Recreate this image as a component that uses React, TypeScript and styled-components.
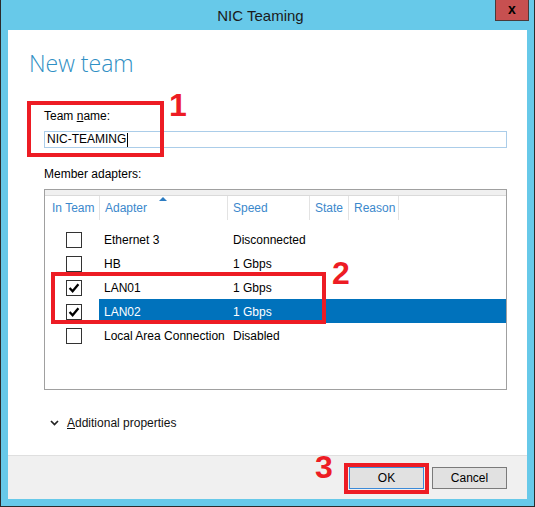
import styled, { createGlobalStyle } from "styled-components"

const GlobalStyle = createGlobalStyle`
  html, body {
    margin: 0;
    padding: 0;
  }
  body {
    width: 535px;
    height: 507px;
    overflow: hidden;
    font-family: "Liberation Sans", Arial, sans-serif;
    font-size: 12px;
    color: #000;
  }
`

const adapters = [
  { name: "Ethernet 3", speed: "Disconnected", inTeam: false, selected: false },
  { name: "HB", speed: "1 Gbps", inTeam: false, selected: false },
  { name: "LAN01", speed: "1 Gbps", inTeam: true, selected: false },
  { name: "LAN02", speed: "1 Gbps", inTeam: true, selected: true },
  { name: "Local Area Connection", speed: "Disabled", inTeam: false, selected: false },
]

const headers = ["In Team", "Adapter", "Speed", "State", "Reason"]

const Check = () => (
  <svg width="14" height="14" viewBox="0 0 14 14">
    <path d="M2.6 7 L5.6 10.2 L11.4 3.2" fill="none" stroke="#000" strokeWidth="2.3" />
  </svg>
)

const App = () => {
  return (
    <>
      <GlobalStyle />
      <Window>
        <TitleBar>
          NIC Teaming
          <CloseButton>x</CloseButton>
        </TitleBar>
        <Client>
          <Main>
            <Heading>New team</Heading>
            <Form>
              <Label>
                Team <u>n</u>ame:
              </Label>
              <TextBox>
                NIC-TEAMING
                <Caret />
              </TextBox>
              <Label $gap={18}>Member adapters:</Label>
              <ListBox>
                <TopBand />
                <HeaderRow>
                  {headers.map((h, i) => (
                    <HeaderCell key={h} $first={i === 0}>
                      {i === 1 && <SortArrow />}
                      {h}
                    </HeaderCell>
                  ))}
                </HeaderRow>
                <Rows>
                  {adapters.map((a) => (
                    <Row key={a.name}>
                      <CheckCell>
                        <CheckBox>{a.inTeam && <Check />}</CheckBox>
                      </CheckCell>
                      <RowMain $selected={a.selected}>
                        <Cell>{a.name}</Cell>
                        <Cell>{a.speed}</Cell>
                      </RowMain>
                    </Row>
                  ))}
                </Rows>
              </ListBox>
              <Expander>
                <svg width="9" height="6" viewBox="0 0 9 6">
                  <path d="M1 1 L4.5 4.5 L8 1" fill="none" stroke="#222" strokeWidth="1.7" />
                </svg>
                <span>
                  <u>A</u>dditional properties
                </span>
              </Expander>
            </Form>
          </Main>
          <Footer>
            <Button $primary>OK</Button>
            <Button>Cancel</Button>
          </Footer>
        </Client>

        {/* red annotations drawn over the dialog */}
        <Mark style={{ left: 26, top: 101, width: 137, height: 56 }} />
        <Digit style={{ left: 168, top: 89 }}>1</Digit>
        <Mark style={{ left: 50, top: 272, width: 275, height: 52 }} />
        <Digit style={{ left: 331, top: 257 }}>2</Digit>
        <Mark style={{ left: 343, top: 463, width: 85, height: 31 }} />
        <Digit style={{ left: 314, top: 451 }}>3</Digit>
      </Window>
    </>
  )
}

export default App

const Window = styled.div`
  position: relative;
  width: 535px;
  height: 507px;
  box-sizing: border-box;
  background: #67c9e9;
  border: 1px solid #2b2b2b;
  border-top: none;
  display: flex;
  flex-direction: column;
`

const TitleBar = styled.div`
  position: relative;
  height: 30px;
  flex-shrink: 0;
  display: flex;
  align-items: center;
  justify-content: center;
  padding-right: 14px;
  font-size: 15px;
  color: #1b1b1b;
`

const CloseButton = styled.div`
  position: absolute;
  top: 0;
  right: 5px;
  width: 34px;
  height: 21px;
  box-sizing: border-box;
  background: #c75050;
  border: 1px solid #4a3a3a;
  border-top: none;
  display: flex;
  align-items: center;
  justify-content: center;
  font-size: 14px;
  font-weight: 700;
  padding-bottom: 2px;
  color: #000;
`

const Client = styled.div`
  flex: 1;
  margin: 0 7px 7px 7px;
  background: #fff;
  display: flex;
  flex-direction: column;
`

const Main = styled.div`
  flex: 1;
  padding: 17px 20px 0 21px;
  display: flex;
  flex-direction: column;
`

const Heading = styled.h1`
  margin: 0;
  font-family: "Open Sans", "Noto Sans", sans-serif;
  font-weight: 300;
  font-size: 23px;
  line-height: 32px;
  color: #2f8fc4;
`

const Form = styled.div`
  padding-left: 15px;
  display: flex;
  flex-direction: column;
`

const Label = styled.div<{ $gap?: number }>`
  margin-top: ${(p) => p.$gap ?? 29}px;
  line-height: 16px;
  margin-bottom: 7px;
`

const TextBox = styled.div`
  height: 17px;
  box-sizing: border-box;
  border: 1px solid #abcde9;
  padding-left: 2px;
  display: flex;
  align-items: center;
  line-height: 15px;
`

const Caret = styled.span`
  display: inline-block;
  width: 1px;
  height: 14px;
  background: #000;
  margin-left: 1px;
`

const ListBox = styled.div`
  height: 201px;
  box-sizing: border-box;
  border: 1px solid #a0a0a0;
  display: flex;
  flex-direction: column;
`

const TopBand = styled.div`
  height: 5px;
  background: #f0f0f0;
  border-bottom: 1px solid #dadada;
`

const HeaderRow = styled.div`
  display: grid;
  grid-template-columns: 55px 128px 82px 39px 50px 1fr;
  height: 24px;
`

const HeaderCell = styled.div<{ $first?: boolean }>`
  position: relative;
  display: flex;
  align-items: center;
  padding-left: ${(p) => (p.$first ? 7 : 5)}px;
  border-right: 1px solid #e3e3e3;
  color: #3b88cc;
  white-space: nowrap;
`

const SortArrow = styled.span`
  position: absolute;
  top: 1px;
  left: 59px;
  width: 0;
  height: 0;
  border-left: 4px solid transparent;
  border-right: 4px solid transparent;
  border-bottom: 4px solid #2c7cc2;
`

const Rows = styled.div`
  padding-top: 7px;
  display: flex;
  flex-direction: column;
`

const Row = styled.div`
  display: grid;
  grid-template-columns: 54px 1fr;
  height: 24px;
`

const CheckCell = styled.div`
  display: flex;
  align-items: center;
  padding: 2px 0 0 21px;
`

const CheckBox = styled.div`
  width: 16px;
  height: 16px;
  box-sizing: border-box;
  border: 1px solid #333;
  background: #fff;
  display: flex;
  align-items: center;
  justify-content: center;
`

const RowMain = styled.div<{ $selected?: boolean }>`
  display: grid;
  grid-template-columns: 129px 1fr;
  background: ${(p) => (p.$selected ? "#0072bc" : "transparent")};
  color: ${(p) => (p.$selected ? "#fff" : "#000")};
`

const Cell = styled.div`
  display: flex;
  align-items: center;
  padding: 2px 0 0 5px;
  white-space: nowrap;
`

const Expander = styled.div`
  margin-top: 25px;
  margin-left: 6px;
  display: flex;
  align-items: center;
  gap: 8px;
  line-height: 16px;
  color: #111;
`

const Footer = styled.div`
  height: 44px;
  box-sizing: border-box;
  background: #f0f0f0;
  border-top: 1px solid #dfdfdf;
  display: flex;
  justify-content: flex-end;
  align-items: flex-start;
  gap: 8px;
  padding: 11px 20px 0 0;
`

const Button = styled.div<{ $primary?: boolean }>`
  width: 75px;
  height: 22px;
  box-sizing: border-box;
  background: #e1e1e1;
  border: 1px solid ${(p) => (p.$primary ? "#3c8ad8" : "#7a7a7a")};
  display: flex;
  align-items: center;
  justify-content: center;
  color: #000;
`

const Mark = styled.div`
  position: absolute;
  box-sizing: border-box;
  border: 4px solid #ed1c24;
`

const Digit = styled.div`
  position: absolute;
  font-family: "Liberation Sans", Arial, sans-serif;
  font-weight: 700;
  font-size: 32px;
  line-height: 32px;
  color: #ed1c24;
`
